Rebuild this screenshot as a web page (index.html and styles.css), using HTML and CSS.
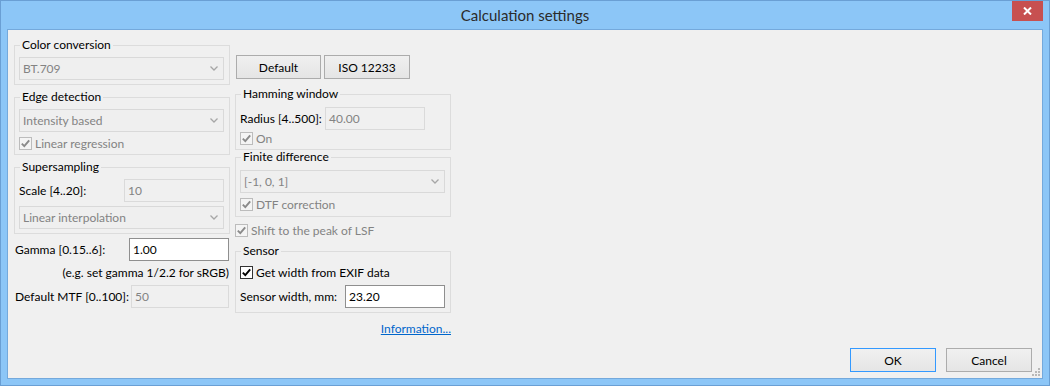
FILE: index.html
```html
<!DOCTYPE html>
<html>
<head>
<meta charset="utf-8">
<title>Calculation settings</title>
<link rel="stylesheet" href="styles.css">
</head>
<body>
<div class="window">
  <div class="titlebar">
    <span class="title">Calculation settings</span>
    <button class="close" aria-label="Close">
      <svg width="9" height="8" viewBox="0 0 9 8"><path d="M1 0.5 L8 7.5 M8 0.5 L1 7.5" stroke="#fff" stroke-width="2" fill="none"/></svg>
    </button>
  </div>
  <div class="frame">
    <div class="main">
      <div class="col col-left">
        <fieldset class="group g-color">
          <legend>Color conversion</legend>
          <div class="combo"><span>BT.709</span><svg class="chev" width="8" height="5" viewBox="0 0 8 5"><polyline points="0.5,0.5 4,4 7.5,0.5" /></svg></div>
        </fieldset>
        <fieldset class="group g-edge">
          <legend>Edge detection</legend>
          <div class="combo"><span>Intensity based</span><svg class="chev" width="8" height="5" viewBox="0 0 8 5"><polyline points="0.5,0.5 4,4 7.5,0.5" /></svg></div>
          <label class="check disabled mt4"><span class="box"><svg width="11" height="11" viewBox="0 0 11 11"><path d="M1.8 5.6 L4.3 8.2 L9.2 2.4"/></svg></span>Linear regression</label>
        </fieldset>
        <fieldset class="group g-super">
          <legend>Supersampling</legend>
          <div class="row"><span class="lbl w105">Scale [4..20]:</span><span class="field disabled">10</span></div>
          <div class="combo mt4"><span>Linear interpolation</span><svg class="chev" width="8" height="5" viewBox="0 0 8 5"><polyline points="0.5,0.5 4,4 7.5,0.5" /></svg></div>
        </fieldset>
        <div class="row outer gamma"><span class="lbl w114">Gamma [0.15..6]:</span><span class="field enabled">1.00</span></div>
        <div class="note">(e.g. set gamma 1/2.2 for sRGB)</div>
        <div class="row outer mtf"><span class="lbl w116">Default MTF [0..100]:</span><span class="field disabled w98">50</span></div>
      </div>
      <div class="col col-right">
        <div class="btnrow">
          <button class="btn w85">Default</button>
          <button class="btn w86">ISO 12233</button>
        </div>
        <fieldset class="group g-hamming">
          <legend>Hamming window</legend>
          <div class="row"><span class="lbl w85">Radius [4..500]:</span><span class="field disabled">40.00</span></div>
          <label class="check disabled mt1"><span class="box"><svg width="11" height="11" viewBox="0 0 11 11"><path d="M1.8 5.6 L4.3 8.2 L9.2 2.4"/></svg></span>On</label>
        </fieldset>
        <fieldset class="group g-finite">
          <legend>Finite difference</legend>
          <div class="combo"><span>[-1, 0, 1]</span><svg class="chev" width="8" height="5" viewBox="0 0 8 5"><polyline points="0.5,0.5 4,4 7.5,0.5" /></svg></div>
          <label class="check disabled mt4"><span class="box"><svg width="11" height="11" viewBox="0 0 11 11"><path d="M1.8 5.6 L4.3 8.2 L9.2 2.4"/></svg></span>DTF correction</label>
        </fieldset>
        <label class="check disabled shift"><span class="box"><svg width="11" height="11" viewBox="0 0 11 11"><path d="M1.8 5.6 L4.3 8.2 L9.2 2.4"/></svg></span>Shift to the peak of LSF</label>
        <fieldset class="group g-sensor">
          <legend>Sensor</legend>
          <label class="check enabled"><span class="box"><svg width="11" height="11" viewBox="0 0 11 11"><path d="M1.8 5.6 L4.3 8.2 L9.2 2.4"/></svg></span>Get width from EXIF data</label>
          <div class="row mt6"><span class="lbl w105">Sensor width, mm:</span><span class="field enabled">23.20</span></div>
        </fieldset>
        <a class="info" href="#">Information...</a>
      </div>
    </div>
    <div class="footer">
      <button class="btn btn-default w86">OK</button>
      <button class="btn w86">Cancel</button>
    </div>
    <svg class="grip" width="9" height="9" viewBox="0 0 9 9">
      <rect x="7" y="1" width="2" height="2"/><rect x="4" y="4" width="2" height="2"/><rect x="7" y="4" width="2" height="2"/>
      <rect x="1" y="7" width="2" height="2"/><rect x="4" y="7" width="2" height="2"/><rect x="7" y="7" width="2" height="2"/>
    </svg>
  </div>
</div>
</body>
</html>
```

FILE: styles.css
```css
* { box-sizing: border-box; }
html, body { margin: 0; padding: 0; }
body {
  width: 1050px;
  height: 386px;
  overflow: hidden;
  font-family: Lato, "Noto Sans", "Liberation Sans", sans-serif;
  font-size: 12px;
  color: #000;
  background: #fff;
}

.window {
  width: 1050px;
  height: 386px;
  border: 1px solid #6a9fd4;
  background: #8cc6f7;
  display: flex;
  flex-direction: column;
}

.titlebar {
  height: 28px;
  flex: none;
  display: grid;
  grid-template-columns: 1fr auto 1fr;
  align-items: start;
}
.title {
  grid-column: 2;
  font-size: 15px;
  line-height: 29px;
  color: #2b2b2b;
}
.close {
  grid-column: 3;
  justify-self: end;
  width: 31px;
  height: 20px;
  margin-right: 6px;
  padding: 0;
  border: 0;
  background: #c75050;
  display: flex;
  align-items: center;
  justify-content: center;
}

.frame {
  flex: 1;
  margin: 0 6px 6px;
  border: 1px solid #74a9dc;
  background: #f0f0f0;
  display: flex;
  flex-direction: column;
  position: relative;
}

.main {
  flex: 1;
  display: flex;
  gap: 5px;
  padding: 8px 0 0 6px;
}
.col {
  width: 216px;
  display: flex;
  flex-direction: column;
}

.group {
  margin: 0;
  padding: 0 5px 4px 4px;
  border: 1px solid #dcdcdc;
  min-width: 0;
}
.group legend {
  padding: 0 2px;
  margin-left: 1px;
  line-height: 14px;
}

.g-color { padding-top: 5px; }
.g-edge { margin-top: 5px; padding-top: 5px; }
.g-super { margin-top: 5px; padding-top: 5px; }

.g-hamming { margin-top: 8px; padding-top: 6px; }
.g-finite { padding-top: 6px; padding-bottom: 5px; }
.g-sensor { margin-top: 7px; padding-top: 7px; }

.mt1 { margin-top: 1px; }
.mt4 { margin-top: 4px; }
.mt6 { margin-top: 6px; }

.row {
  display: flex;
  align-items: center;
}
.lbl { flex: none; }
.w85 { width: 85px; }
.w86 { width: 86px; }
.w105 { width: 105px; }
.w114 { width: 114px; }
.w116 { width: 116px; }

.outer { padding: 0 1px 0 1px; }
.gamma { margin-top: 4px; }
.mtf { margin-top: 4px; }

.note {
  text-align: right;
  padding-right: 1px;
  line-height: 16px;
  margin-top: 4px;
}

.combo {
  height: 23px;
  border: 1px solid #d9d9d9;
  background: #efefef;
  color: #838383;
  display: flex;
  align-items: center;
  justify-content: space-between;
  padding: 0 5px 0 3px;
}
.chev polyline {
  fill: none;
  stroke: #a6a6a6;
  stroke-width: 1.3;
}

.field {
  width: 100px;
  height: 23px;
  border: 1px solid #d9d9d9;
  padding: 0 3px;
  display: flex;
  align-items: center;
}
.field.w98 { width: 98px; }
.field.disabled {
  background: #f0f0f0;
  border-color: #dadada;
  color: #838383;
}
.field.enabled {
  background: #fff;
  border-color: #8f8f8f;
  color: #000;
}

.check {
  display: flex;
  align-items: center;
  height: 14px;
}
.check .box {
  width: 13px;
  height: 13px;
  margin-right: 3px;
  border: 1px solid #bcbcbc;
  background: #f4f4f4;
  display: flex;
  align-items: center;
  justify-content: center;
}
.check .box path {
  fill: none;
  stroke-width: 1.9;
}
.check.disabled { color: #838383; }
.check.disabled .box path { stroke: #8a8a8a; }
.check.enabled .box { border-color: #333; background: #fff; }
.check.enabled .box path { stroke: #000; }

.shift { margin-top: 6px; }

.btnrow {
  display: flex;
  gap: 3px;
  margin-top: 17px;
  padding-left: 1px;
}
.btn {
  height: 24px;
  border: 1px solid #acacac;
  background: linear-gradient(#f0f0f0, #e5e5e5);
  font: inherit;
  color: #000;
  padding: 0;
}
.btn-default { border-color: #3399ff; }

.info {
  align-self: flex-end;
  margin-top: 8px;
  line-height: 16px;
  color: #0066cc;
  text-decoration: underline;
}

.footer {
  display: flex;
  justify-content: flex-end;
  gap: 10px;
  padding: 0 10px 6px 0;
}

.grip {
  position: absolute;
  right: 2px;
  bottom: 2px;
  fill: #b8b8b8;
}
```
